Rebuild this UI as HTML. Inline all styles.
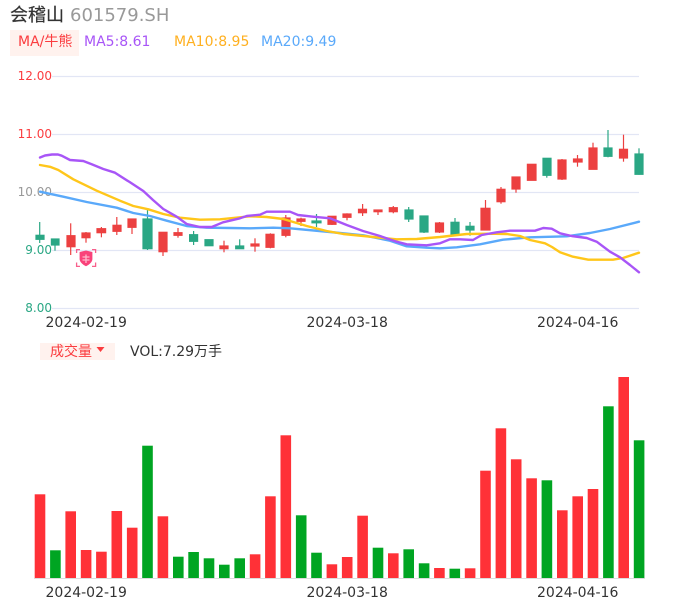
<!DOCTYPE html>
<html><head><meta charset="utf-8"><style>
html,body{margin:0;padding:0;background:#fff;width:686px;height:606px;overflow:hidden}
svg{display:block}
text{font-family:"DejaVu Sans","Noto Sans CJK SC",sans-serif}
</style></head><body>
<svg width="686" height="606" viewBox="0 0 686 606" xmlns="http://www.w3.org/2000/svg">
<text x="10" y="21" font-size="18" fill="#333" stroke="#333" stroke-width="0.2" font-family="'Noto Sans CJK SC',sans-serif">会稽山</text>
<text x="70" y="21" font-size="18" fill="#999">601579.SH</text>
<rect x="10" y="30" width="69" height="26" fill="#fff2ee"/>
<text x="18" y="46" font-size="14" fill="#fb3c3f">MA/牛熊</text>
<text x="84" y="46" font-size="14" fill="#a855f7">MA5:8.61</text>
<text x="174" y="46" font-size="14" fill="#ffb020">MA10:8.95</text>
<text x="261" y="46" font-size="14" fill="#5aa9fa">MA20:9.49</text>
<g stroke="#e2e6f5" stroke-width="1.2">
<line x1="52" x2="639" y1="76.5" y2="76.5"/><line x1="52" x2="639" y1="134.5" y2="134.5"/><line x1="52" x2="639" y1="192.5" y2="192.5"/><line x1="52" x2="639" y1="250.5" y2="250.5"/><line x1="52" x2="639" y1="308.5" y2="308.5"/>
</g>
<g font-size="12" text-anchor="end">
<text x="52" y="80" fill="#fb3c3f">12.00</text><text x="52" y="138" fill="#fb3c3f">11.00</text><text x="52" y="196" fill="#999">10.00</text><text x="52" y="254" fill="#2aa784">9.00</text><text x="52" y="312" fill="#2aa784">8.00</text>
</g>
<g stroke-width="1.2" stroke="#2aa784" fill="#2aa784">
<line x1="39.7" x2="39.7" y1="222" y2="243"/><rect x="36" y="235.3" width="8" height="4"/>
<line x1="55" x2="55" y1="239" y2="250.7"/><rect x="51.4" y="239" width="7.6" height="6"/>
<line x1="147.5" x2="147.5" y1="210" y2="250"/><rect x="143" y="219" width="9" height="29.7"/>
<line x1="193.6" x2="193.6" y1="231" y2="245"/><rect x="189.6" y="234.7" width="8" height="6.6"/>
<rect x="205" y="239.7" width="8" height="6"/>
<line x1="239.7" x2="239.7" y1="239.3" y2="248.7"/><rect x="235.7" y="246" width="8" height="2.7"/>
<line x1="316.5" x2="316.5" y1="214" y2="227"/><rect x="312" y="221" width="9" height="1.8"/>
<line x1="408.7" x2="408.7" y1="207" y2="222"/><rect x="405" y="210" width="8" height="9"/>
<line x1="424" x2="424" y1="216" y2="233"/><rect x="420" y="216" width="8" height="16"/>
<line x1="455" x2="455" y1="218" y2="235"/><rect x="451" y="222.3" width="8" height="12.4"/>
<line x1="470" x2="470" y1="222" y2="235.7"/><rect x="466" y="226.3" width="8" height="3.7"/>
<line x1="546.8" x2="546.8" y1="158" y2="177.7"/><rect x="543" y="158.3" width="8" height="17"/>
<line x1="608" x2="608" y1="130" y2="157.3"/><rect x="604" y="148" width="8" height="8.3"/>
<line x1="639" x2="639" y1="148.3" y2="174.7"/><rect x="635" y="154" width="8" height="20.3"/>
</g>
<g stroke-width="1.2" stroke="#ec4040" fill="#ec4040">
<line x1="70.7" x2="70.7" y1="223.3" y2="255"/><rect x="67" y="235.7" width="8" height="11"/>
<line x1="86" x2="86" y1="232" y2="242.7"/><rect x="82" y="233" width="8" height="4.7"/>
<line x1="101.4" x2="101.4" y1="227" y2="237.3"/><rect x="97" y="228.7" width="8.6" height="4"/>
<line x1="116.8" x2="116.8" y1="217" y2="235"/><rect x="113" y="225.3" width="8" height="6"/>
<line x1="132" x2="132" y1="219" y2="234"/><rect x="128" y="219" width="8" height="8.3"/>
<line x1="163" x2="163" y1="232.3" y2="256"/><rect x="159" y="232.3" width="8" height="19.4"/>
<line x1="178" x2="178" y1="228" y2="237.7"/><rect x="174" y="232.7" width="8" height="2.6"/>
<line x1="224" x2="224" y1="240.7" y2="252.3"/><rect x="220" y="246" width="8" height="2.7"/>
<line x1="255" x2="255" y1="238.3" y2="251.7"/><rect x="251" y="244" width="8" height="2"/>
<line x1="270.4" x2="270.4" y1="233.3" y2="248.3"/><rect x="266" y="234.3" width="8" height="13"/>
<line x1="285.8" x2="285.8" y1="215" y2="237.3"/><rect x="282" y="218" width="8" height="17.3"/>
<line x1="301" x2="301" y1="217.7" y2="226"/><rect x="297" y="219" width="8" height="2.3"/>
<line x1="332" x2="332" y1="216" y2="225"/><rect x="328" y="216.3" width="8" height="8"/>
<line x1="347" x2="347" y1="213.3" y2="220.3"/><rect x="343" y="214" width="8" height="3.3"/>
<line x1="362.6" x2="362.6" y1="204" y2="216"/><rect x="358.5" y="209.3" width="8" height="3.4"/>
<line x1="378" x2="378" y1="210" y2="215"/><rect x="374" y="210" width="8" height="1.7"/>
<line x1="393.3" x2="393.3" y1="206" y2="213.3"/><rect x="389.3" y="207.7" width="8" height="4"/>
<line x1="439.5" x2="439.5" y1="222" y2="233"/><rect x="435.5" y="223" width="8" height="9"/>
<line x1="485.5" x2="485.5" y1="200" y2="230"/><rect x="481" y="208.3" width="9" height="21.7"/>
<line x1="501" x2="501" y1="187" y2="203.7"/><rect x="497" y="189.3" width="8" height="12.4"/>
<line x1="516" x2="516" y1="177" y2="192.7"/><rect x="512" y="177" width="8" height="12"/>
<rect x="527.4" y="164.3" width="8.6" height="16"/>
<line x1="562" x2="562" y1="159" y2="180"/><rect x="558" y="160" width="8" height="19"/>
<line x1="577.5" x2="577.5" y1="155" y2="166.7"/><rect x="573.5" y="159" width="8.6" height="3"/>
<line x1="593" x2="593" y1="142.7" y2="169.3"/><rect x="589" y="148" width="8" height="21.3"/>
<line x1="623.5" x2="623.5" y1="134.7" y2="161.7"/><rect x="619.5" y="149.3" width="8" height="8.7"/>
</g>
<g fill="none" stroke-width="2.4" stroke-linejoin="round" stroke-linecap="round">
<polyline stroke="#5aa9fa" points="40,191.7 63.3,196.7 86.7,202 116.7,207.7 133.3,213 150,216 166.7,220.7 186.7,226 206.7,227.7 230,228 250,228.3 273.3,227.7 290,228.3 330,232 363.3,235.3 390,240.7 406.7,246.3 426.7,247.7 440,248.3 456.7,247.3 480,244.3 503,239.7 530,237.3 566.7,236.3 590,233 610,229 639,221.7"/>
<polyline stroke="#ffc61a" points="40,165 50,166.8 58.3,170 73.3,179.3 96.7,190.7 120,200.7 133.3,206 148.3,209.3 163.3,214 180,217.7 200,219.7 220,219.3 230,218.3 250,216.3 266.7,217 283.3,219 306.7,226 326.7,231 343.3,234 370,236.7 396.7,239.3 416.7,239 440,237 466.7,234 490,233.7 506.7,234 520,236 530,240 545,243.3 552,247 560,252.3 573,256.7 588.3,259.7 613,259.7 623,258 639,252.7"/>
<polyline stroke="#a855f7" points="40,157.5 45,155.5 52,154.5 58,154.5 61.7,155.7 70,160 83.3,161 91.7,164.3 103.3,169 115,172.7 130,182.3 143.3,191 153,200 163.3,209 176.7,216.7 186.7,224 200,227 211.7,227 223,222.3 240,218.3 246.7,216 260,214.7 266.7,211.7 290,211.7 298,215 313,216.7 330,218.3 346.7,225 363,231 380,236 396.7,241.7 406.7,244.3 426.7,245.3 440,243.3 450,239.3 460,239.3 473,240 481.7,235 496.7,232.3 510,230.7 535,230.7 543.3,228 551.7,228.7 560,233.3 571.7,236 586.7,238 596.7,241.7 610,251.7 620,257.3 630,265 639,272.3"/>
</g>
<g fill="none" stroke="#f8608c" stroke-width="1.3">
<path d="M76.6 253V249.6H80M92 249.6H95.6V253M76.6 262.5V266.4H80M92 266.4H95.6V262.5"/>
</g>
<path d="M79.6 252L86 250.5L92.4 252V259C92.4 262 89 265 86 266.2C83 265 79.6 262 79.6 259Z" fill="#f9427a"/>
<path d="M82.5 257H89.5M82.5 260H89.5M86 254.5V263" stroke="#ffb8cc" stroke-width="1.3" fill="none"/>
<g font-size="14" fill="#333">
<text x="45.5" y="327">2024-02-19</text><text x="306.5" y="327">2024-03-18</text><text x="537" y="327">2024-04-16</text>
<text x="45.5" y="597">2024-02-19</text><text x="306.5" y="597">2024-03-18</text><text x="537" y="597">2024-04-16</text>
</g>
<rect x="40" y="343" width="75" height="17" fill="#fff2ee"/>
<text x="50" y="356" font-size="14" fill="#fb3c3f">成交量</text>
<path d="M96.5 347H104.5L100.5 352Z" fill="#fb3c3f"/>
<text x="130" y="356" font-size="14" fill="#333">VOL:7.29万手</text>
<line x1="34" x2="645" y1="578.5" y2="578.5" stroke="#ddd" stroke-width="1"/>
<g fill="#ff3137">
<rect x="34.7" y="494.3" width="10.6" height="83.7"/>
<rect x="65.4" y="511.3" width="10.6" height="66.7"/>
<rect x="80.8" y="550" width="10.6" height="28"/>
<rect x="96.1" y="551.7" width="10.6" height="26.3"/>
<rect x="111.5" y="511" width="10.6" height="67"/>
<rect x="126.9" y="527.7" width="10.6" height="50.3"/>
<rect x="157.6" y="516.3" width="10.6" height="61.7"/>
<rect x="249.8" y="554.3" width="10.6" height="23.7"/>
<rect x="265.1" y="496.3" width="10.6" height="81.7"/>
<rect x="280.5" y="435.3" width="10.6" height="142.7"/>
<rect x="326.6" y="564.3" width="10.6" height="13.7"/>
<rect x="341.9" y="557" width="10.6" height="21"/>
<rect x="357.3" y="515.7" width="10.6" height="62.3"/>
<rect x="388" y="553.3" width="10.6" height="24.7"/>
<rect x="434.1" y="568" width="10.6" height="10"/>
<rect x="464.8" y="568.3" width="10.6" height="9.7"/>
<rect x="480.2" y="470.7" width="10.6" height="107.3"/>
<rect x="495.6" y="428.3" width="10.6" height="149.7"/>
<rect x="510.9" y="459.3" width="10.6" height="118.7"/>
<rect x="526.3" y="478.3" width="10.6" height="99.7"/>
<rect x="557" y="510.3" width="10.6" height="67.7"/>
<rect x="572.4" y="496.3" width="10.6" height="81.7"/>
<rect x="587.7" y="489" width="10.6" height="89"/>
<rect x="618.4" y="377" width="10.6" height="201"/>
</g>
<g fill="#00a522">
<rect x="50.1" y="550.3" width="10.6" height="27.7"/>
<rect x="142.2" y="445.7" width="10.6" height="132.3"/>
<rect x="173" y="556.7" width="10.6" height="21.3"/>
<rect x="188.3" y="552" width="10.6" height="26"/>
<rect x="203.7" y="558.3" width="10.6" height="19.7"/>
<rect x="219" y="564.7" width="10.6" height="13.3"/>
<rect x="234.4" y="558.3" width="10.6" height="19.7"/>
<rect x="295.9" y="515.3" width="10.6" height="62.7"/>
<rect x="311.2" y="552.7" width="10.6" height="25.3"/>
<rect x="372.7" y="547.7" width="10.6" height="30.3"/>
<rect x="403.4" y="549.3" width="10.6" height="28.7"/>
<rect x="418.8" y="563.3" width="10.6" height="14.7"/>
<rect x="449.5" y="568.7" width="10.6" height="9.3"/>
<rect x="541.6" y="480.3" width="10.6" height="97.7"/>
<rect x="603.1" y="406.3" width="10.6" height="171.7"/>
<rect x="633.8" y="440.3" width="10.6" height="137.7"/>
</g>
</svg>
</body></html>
